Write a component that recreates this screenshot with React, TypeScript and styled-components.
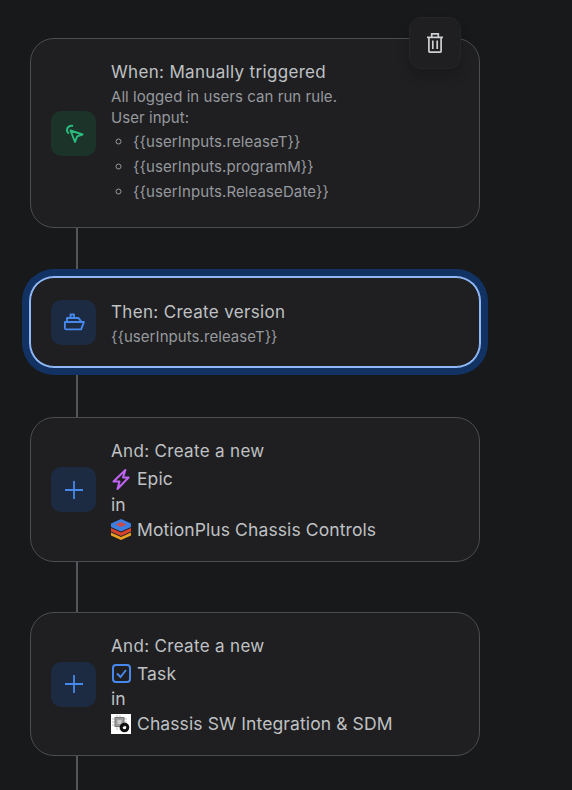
import React from "react";
import styled, { createGlobalStyle } from "styled-components";

const Global = createGlobalStyle`
  html, body { margin: 0; padding: 0; background: #18191a; }
  body { font-family: Inter, "Noto Sans", "Liberation Sans", sans-serif; height: 790px; overflow: hidden; }
`;

const Page = styled.main`
  width: 572px;
  height: 790px;
  box-sizing: border-box;
  padding: 38px 92px 0 30px;
  overflow: hidden;
`;

const Flow = styled.div`
  display: flex;
  flex-direction: column;
`;

const Card = styled.section<{ $selected?: boolean }>`
  position: relative;
  display: flex;
  align-items: center;
  gap: 15px;
  padding: 0 20px;
  border-radius: 24px;
  background: #1f1f21;
  border: 1px solid ${(p) => (p.$selected ? "#8fb8f6" : "#4b4d51")};
  ${(p) =>
    p.$selected
      ? "box-shadow: 0 0 0 1px #8fb8f6, 0 0 0 8px #123263; z-index: 1;"
      : ""}
`;

const Tile = styled.div<{ $tone: "green" | "blue" }>`
  flex: none;
  width: 45px;
  height: 45px;
  border-radius: 10px;
  display: flex;
  align-items: center;
  justify-content: center;
  background: ${(p) => (p.$tone === "green" ? "#1c3329" : "#1c2b42")};
  color: ${(p) => (p.$tone === "green" ? "#2abb7f" : "#4688ec")};
`;

const Body = styled.div<{ $top: number; $bottom: number }>`
  min-width: 0;
  display: flex;
  flex-direction: column;
  padding: ${(p) => p.$top}px 0 ${(p) => p.$bottom}px;
`;

const Title = styled.div`
  font-size: 17px;
  letter-spacing: 0.33px;
  line-height: 20px;
  color: #bfc1c4;
`;

const Sub = styled.div`
  font-size: 15px;
  letter-spacing: 0.06px;
  line-height: 21px;
  color: #96999e;
  ${Title} + & { margin-top: 4px; }
`;

const Inputs = styled.ul`
  margin: 1px 0 0;
  padding: 0 0 0 22px;
  list-style: circle;
  color: #96999e;
  font-size: 15px;
  letter-spacing: 0.1px;
  line-height: 25px;
`;

const Token = styled.li`
  color: #96999e;
`;

const Line = styled.div<{ $h?: number }>`
  font-size: 17.5px;
  letter-spacing: 0.1px;
  line-height: ${(p) => p.$h ?? 25}px;
  color: #bfc1c4;
  display: flex;
  align-items: center;
  gap: 6px;
  ${Title} + & { margin-top: 5px; }
`;

const Connector = styled.div<{ $h: number }>`
  width: 2px;
  height: ${(p) => p.$h}px;
  margin-left: 46px;
  background: #54565a;
`;

const IconSlot = styled.span`
  flex: none;
  width: 20px;
  height: 20px;
  display: flex;
  align-items: center;
  justify-content: center;
`;

const Delete = styled.button`
  position: absolute;
  top: -22px;
  right: 18px;
  width: 52px;
  height: 52px;
  padding: 0;
  border: 1px solid #242528;
  border-radius: 12px;
  background: #1f1f21;
  color: #cecfd2;
  box-shadow: 0 8px 12px rgba(0, 0, 0, 0.18);
  display: flex;
  align-items: center;
  justify-content: center;
`;

const Trash = () => (
  <svg width="16" height="20" viewBox="0 0 16 20" fill="none" stroke="currentColor" strokeWidth="1.7">
    <path d="M0 4.300h16M4.700 4.300V.9h6.600v3.400M1.900 4.300v13.600a1.300 1.300 0 0 0 1.300 1.300h9.600a1.300 1.300 0 0 0 1.300-1.300V4.300M5.800 7.500v8.500M10.200 7.500v8.500" />
  </svg>
);

const Cursor = () => (
  <svg width="20" height="20" viewBox="0 0 20 20" fill="none" stroke="currentColor" strokeWidth="1.9" strokeLinejoin="round">
    <path d="M6.500 7.500 18.500 11.500 13.200 13.400 11 19z" />
    <path d="M9 3a4.500 4.500 0 0 0-6 3.500c-.2 1.500.5 3 2 4" strokeWidth="2" />
  </svg>
);

const Ship = () => (
  <svg width="22" height="18" viewBox="0 0 22 18" fill="none" stroke="currentColor" strokeWidth="1.9" strokeLinejoin="round">
    <path d="M1.900 9h19l-2.800 7.400H3.400a1.500 1.500 0 0 1-1.500-1.500z" />
    <path d="M4 9V5h11.500L18.500 9" />
    <path d="M7.500 5V1.500h3.500V5" />
  </svg>
);

const Plus = () => (
  <svg width="18" height="18" viewBox="0 0 18 18" fill="none" stroke="currentColor" strokeWidth="1.8">
    <path d="M9 0v18M0 9h18" />
  </svg>
);

const Epic = () => (
  <svg width="18" height="21" viewBox="0 0 18 21" fill="none" stroke="#bf63f3" strokeWidth="2" strokeLinejoin="round">
    <path d="M13.400 1 1.500 12.500h6L5.500 20 16.600 8.500H11z" />
  </svg>
);

const Task = () => (
  <svg width="19" height="19" viewBox="0 0 19 19" fill="none" stroke="#4688ec" strokeWidth="2">
    <rect x="1" y="1" width="17" height="17" rx="3" />
    <path d="m5 9.500 3.500 3.500 5.500-7" />
  </svg>
);

const Layers = () => (
  <svg width="20" height="21" viewBox="0 0 20 21">
    <path d="M0 13.500 10 18l10-4.500v3L10 21 0 16.500z" fill="#e8a020" />
    <path d="M0 9l10 4.500L20 9v3.500L10 17 0 12.500z" fill="#d8432f" />
    <path d="M10 0 20 4.500V8L10 12.500 0 8V4.500z" fill="#3d7fe0" />
    <path d="M10 3 15.500 5.500 10 8 4.500 5.500z" fill="#c94c4c" />
  </svg>
);

const Chassis = () => (
  <svg width="20" height="20" viewBox="0 0 20 20">
    <rect width="20" height="20" fill="#fff" />
    <path d="M6 1v15M9 1v15M1 5h15M1 8h15M1 11h15" stroke="#bdbdbd" strokeWidth="1" />
    <rect x="4" y="3.500" width="9" height="9" fill="#9a9a9a" stroke="#777" />
    <rect x="6.500" y="6" width="4" height="4" fill="#c9c9c9" />
    <circle cx="13.500" cy="13.500" r="3.300" fill="none" stroke="#111" strokeWidth="3" />
  </svg>
);

export default function App() {
  return (
    <>
      <Global />
      <Page>
        <Flow>
          <Card>
            <Tile $tone="green">
              <Cursor />
            </Tile>
            <Body $top={23} $bottom={23}>
              <Title>When: Manually triggered</Title>
              <Sub>All logged in users can run rule.</Sub>
              <Sub>User input:</Sub>
              <Inputs>
                <Token>{"{{userInputs.releaseT}}"}</Token>
                <Token>{"{{userInputs.programM}}"}</Token>
                <Token>{"{{userInputs.ReleaseDate}}"}</Token>
              </Inputs>
            </Body>
            <Delete aria-label="Delete">
              <Trash />
            </Delete>
          </Card>
          <Connector $h={49} />
          <Card $selected>
            <Tile $tone="blue">
              <Ship />
            </Tile>
            <Body $top={24} $bottom={19}>
              <Title>Then: Create version</Title>
              <Sub>{"{{userInputs.releaseT}}"}</Sub>
            </Body>
          </Card>
          <Connector $h={50} />
          <Card>
            <Tile $tone="blue">
              <Plus />
            </Tile>
            <Body $top={23} $bottom={19}>
              <Title>And: Create a new</Title>
              <Line $h={26}>
                <IconSlot>
                  <Epic />
                </IconSlot>
                Epic
              </Line>
              <Line>in</Line>
              <Line>
                <IconSlot>
                  <Layers />
                </IconSlot>
                MotionPlus Chassis Controls
              </Line>
            </Body>
          </Card>
          <Connector $h={50} />
          <Card>
            <Tile $tone="blue">
              <Plus />
            </Tile>
            <Body $top={23} $bottom={19}>
              <Title>And: Create a new</Title>
              <Line>
                <IconSlot>
                  <Task />
                </IconSlot>
                Task
              </Line>
              <Line>in</Line>
              <Line>
                <IconSlot>
                  <Chassis />
                </IconSlot>
                Chassis SW Integration &amp; SDM
              </Line>
            </Body>
          </Card>
          <Connector $h={40} />
        </Flow>
      </Page>
    </>
  );
}
